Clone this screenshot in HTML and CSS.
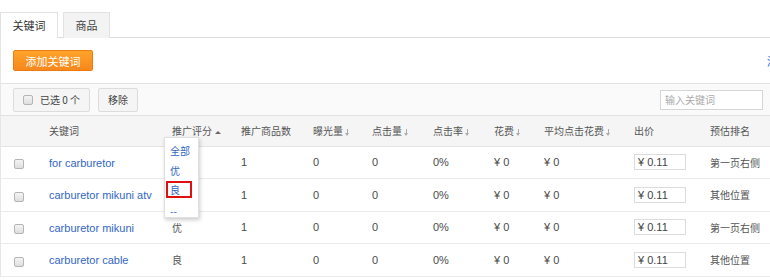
FILE: index.html
```html
<!DOCTYPE html>
<html lang="zh-CN">
<head>
    <meta charset="UTF-8">
    <title>关键词</title>
    <link rel="stylesheet" href="styles.css">
</head>
<body>

    <div class="tabs">
        <div class="tab active">关键词</div>
        <div class="tab">商品</div>
    </div>

    <div class="panel">
        <div class="action-bar">
            <button class="btn-orange">添加关键词</button>
            <a class="more-link" href="#">添加</a>
        </div>

        <div class="toolbar">
            <button class="btn-gray"><span class="check"></span>已选 0 个</button>
            <button class="btn-gray">移除</button>
            <input class="search" type="text" placeholder="输入关键词">
            <button class="btn-gray btn-cut">搜</button>
        </div>

        <table class="grid">
            <colgroup>
                <col class="c-check">
                <col class="c-kw">
                <col class="c-rating">
                <col class="c-count">
                <col class="c-exp">
                <col class="c-click">
                <col class="c-rate">
                <col class="c-cost">
                <col class="c-avg">
                <col class="c-price">
                <col class="c-rank">
            </colgroup>
            <thead>
                <tr>
                    <th></th>
                    <th>关键词</th>
                    <th class="rating-head">
                        推广评分 <span class="arrow-up"></span>
                        <div class="dropdown">
                            <div class="dd-item">全部</div>
                            <div class="dd-item">优</div>
                            <div class="dd-item selected">良</div>
                            <div class="dd-item">--</div>
                        </div>
                    </th>
                    <th>推广商品数</th>
                    <th>曝光量 <span class="arrow-down"></span></th>
                    <th>点击量 <span class="arrow-down"></span></th>
                    <th>点击率 <span class="arrow-down"></span></th>
                    <th>花费 <span class="arrow-down"></span></th>
                    <th>平均点击花费 <span class="arrow-down"></span></th>
                    <th>出价</th>
                    <th>预估排名</th>
                </tr>
            </thead>
            <tbody>
                <tr>
                    <td><span class="check"></span></td>
                    <td><a class="kw" href="#">for carburetor</a></td>
                    <td>优</td>
                    <td class="num">1</td>
                    <td class="num">0</td>
                    <td class="num">0</td>
                    <td class="num">0%</td>
                    <td class="num">¥ 0</td>
                    <td class="num">¥ 0</td>
                    <td><span class="price">¥ 0.11</span></td>
                    <td>第一页右侧</td>
                </tr>
                <tr>
                    <td><span class="check"></span></td>
                    <td><a class="kw" href="#">carburetor mikuni atv</a></td>
                    <td>良</td>
                    <td class="num">1</td>
                    <td class="num">0</td>
                    <td class="num">0</td>
                    <td class="num">0%</td>
                    <td class="num">¥ 0</td>
                    <td class="num">¥ 0</td>
                    <td><span class="price">¥ 0.11</span></td>
                    <td>其他位置</td>
                </tr>
                <tr>
                    <td><span class="check"></span></td>
                    <td><a class="kw" href="#">carburetor mikuni</a></td>
                    <td>优</td>
                    <td class="num">1</td>
                    <td class="num">0</td>
                    <td class="num">0</td>
                    <td class="num">0%</td>
                    <td class="num">¥ 0</td>
                    <td class="num">¥ 0</td>
                    <td><span class="price">¥ 0.11</span></td>
                    <td>第一页右侧</td>
                </tr>
                <tr>
                    <td><span class="check"></span></td>
                    <td><a class="kw" href="#">carburetor cable</a></td>
                    <td>良</td>
                    <td class="num">1</td>
                    <td class="num">0</td>
                    <td class="num">0</td>
                    <td class="num">0%</td>
                    <td class="num">¥ 0</td>
                    <td class="num">¥ 0</td>
                    <td><span class="price">¥ 0.11</span></td>
                    <td>其他位置</td>
                </tr>
            </tbody>
        </table>
    </div>

</body>
</html>
```

FILE: styles.css
```css
/* Reset */
* {
    margin: 0;
    padding: 0;
    box-sizing: border-box;
}

body {
    width: 770px;
    height: 280px;
    overflow: hidden;
    background: #fff;
    color: #555;
    font-family: "Noto Sans CJK SC", "Liberation Sans", sans-serif;
    font-size: 10px;
}

/* Tabs */
.tabs {
    display: flex;
    gap: 5px;
    padding-top: 12px;
    height: 38px;
    border-bottom: 1px solid #ddd;
}

.tab {
    width: 47px;
    height: 26px;
    line-height: 24px;
    text-align: center;
    font-size: 11px;
    color: #444;
    background: #f3f3f3;
    border: 1px solid #e2e2e2;
    border-bottom: none;
}

.tab.active {
    width: 58px;
    background: #fff;
    margin-bottom: -1px;
    color: #333;
}

/* Panel */
.panel {
    border-left: 1px solid #e6e6e6;
    width: 900px;
}

.action-bar {
    display: flex;
    align-items: center;
    height: 45px;
    padding-left: 12px;
}

.btn-orange {
    width: 80px;
    height: 21px;
    font-family: inherit;
    font-size: 11px;
    color: #fff;
    background: linear-gradient(to bottom, #ffa42a, #f8871c);
    border: 1px solid #ec7b12;
    border-radius: 2px;
}

.more-link {
    margin-left: 674px;
    color: #3366cc;
    font-size: 11px;
    text-decoration: none;
}

.toolbar {
    display: flex;
    align-items: center;
    gap: 8px;
    height: 33px;
    padding-left: 12px;
    background: #fafafa;
    border-top: 1px solid #e2e2e2;
    border-bottom: 1px solid #e2e2e2;
}

.btn-gray {
    display: flex;
    align-items: center;
    gap: 7px;
    height: 24px;
    padding: 0 9px;
    font-family: inherit;
    font-size: 10px;
    color: #444;
    background: #f5f5f5;
    border: 1px solid #dcdcdc;
    border-radius: 2px;
}

.search {
    margin-left: 514px;
    width: 103px;
    height: 20px;
    padding-left: 4px;
    font-family: inherit;
    font-size: 10px;
    border: 1px solid #d6d6d6;
    background: #fff;
}

.search::placeholder {
    color: #aaa;
}

.btn-cut {
    margin-left: 3px;
}

.check {
    display: inline-block;
    width: 10px;
    height: 10px;
    border: 1px solid #b5b5b5;
    border-radius: 2px;
    background: linear-gradient(to bottom, #f4f4f4, #dedede);
    vertical-align: middle;
}

/* Table */
.grid {
    width: 798px;
    table-layout: fixed;
    border-collapse: collapse;
}

.c-check { width: 36px; }
.c-kw { width: 123px; }
.c-rating { width: 69px; }
.c-count { width: 72px; }
.c-exp { width: 59px; }
.c-click { width: 61px; }
.c-rate { width: 61px; }
.c-cost { width: 50px; }
.c-avg { width: 90px; }
.c-price { width: 76px; }
.c-rank { width: 101px; }

.grid th {
    height: 30px;
    padding-left: 12px;
    text-align: left;
    font-weight: normal;
    color: #555;
    background: #f5f5f5;
    border-bottom: 1px solid #e4e4e4;
    white-space: nowrap;
}

.grid td {
    height: 32.5px;
    padding-left: 12px;
    border-bottom: 1px solid #ebebeb;
    white-space: nowrap;
    color: #555;
}

.grid td:first-child {
    padding-left: 13px;
}

.kw {
    font-family: "Liberation Sans", sans-serif;
    font-size: 11px;
    color: #3166c4;
    text-decoration: none;
}

.grid td.num {
    font-family: "Liberation Sans", sans-serif;
    font-size: 11px;
    color: #4a4a4a;
}

.price {
    display: inline-block;
    width: 52px;
    height: 16px;
    line-height: 14px;
    padding-left: 3px;
    font-family: "Liberation Sans", sans-serif;
    font-size: 11px;
    color: #444;
    border: 1px solid #dcdcdc;
}

/* Sort arrows */
.arrow-up {
    display: inline-block;
    width: 0;
    height: 0;
    border-left: 3px solid transparent;
    border-right: 3px solid transparent;
    border-bottom: 3px solid #666;
    vertical-align: middle;
    margin-left: 1px;
}

.arrow-down {
    display: inline-block;
    position: relative;
    width: 5px;
    height: 7px;
    vertical-align: middle;
}

.arrow-down::before {
    content: "";
    position: absolute;
    left: 2px;
    top: 0;
    width: 1px;
    height: 4px;
    background: #aaa;
}

.arrow-down::after {
    content: "";
    position: absolute;
    left: 0;
    top: 4px;
    border-left: 2.5px solid transparent;
    border-right: 2.5px solid transparent;
    border-top: 3px solid #aaa;
}

/* Rating dropdown */
.rating-head {
    position: relative;
}

.dropdown {
    position: absolute;
    left: 4px;
    top: 21px;
    width: 35px;
    height: 81px;
    padding-top: 2px;
    background: #fff;
    border: 1px solid #e0e0e0;
    box-shadow: 1px 2px 4px rgba(0, 0, 0, 0.2);
    z-index: 2;
}

.dd-item {
    height: 20px;
    line-height: 18px;
    padding-left: 2px;
    margin-left: 1px;
    width: 26px;
    color: #3166c4;
    font-size: 10px;
    border: 2px solid transparent;
}

.dd-item.selected {
    border-color: #e01010;
    line-height: 14px;
    height: 17px;
    margin: 1px 0 2px 1px;
}
```
